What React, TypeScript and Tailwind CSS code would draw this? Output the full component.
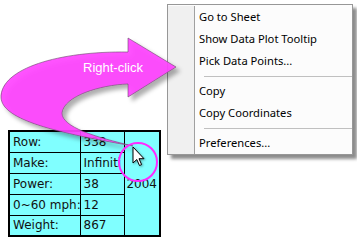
import React from "react";

const rows = [
  { label: "Row:", value: "338" },
  { label: "Make:", value: "Infiniti" },
  { label: "Power:", value: "38" },
  { label: "0~60 mph:", value: "12" },
  { label: "Weight:", value: "867" },
];

type MenuEntry = { label: string } | "sep";

const menu: MenuEntry[] = [
  { label: "Go to Sheet" },
  { label: "Show Data Plot Tooltip" },
  { label: "Pick Data Points..." },
  "sep",
  { label: "Copy" },
  { label: "Copy Coordinates" },
  "sep",
  { label: "Preferences..." },
];

function InfoTable() {
  return (
    <table
      className="w-[151px] table-fixed border-collapse border-2 border-black bg-[#80ffff] text-[12px] text-[#111]"
      style={{ fontFamily: '"DejaVu Sans", sans-serif' }}
    >
      <colgroup>
        <col className="w-[71px]" />
        <col className="w-[44px]" />
        <col className="w-[36px]" />
      </colgroup>
      <tbody>
        {rows.map((r, i) => (
          <tr key={r.label} className="h-[21px]">
            <td className="overflow-hidden whitespace-nowrap border border-black pl-[3px] leading-none">{r.label}</td>
            <td className="overflow-hidden whitespace-nowrap border border-black pl-[3px] leading-none">
              {r.value}
            </td>
            {i === 0 && (
              <td rowSpan={5} className="border border-black text-center align-middle leading-none">
                2004
              </td>
            )}
          </tr>
        ))}
      </tbody>
    </table>
  );
}

function ContextMenu() {
  return (
    <div
      className="relative flex w-[186px] border border-[#979797] bg-[#fcfcfc] pt-[1px] shadow-[4px_4px_3px_rgba(0,0,0,0.45)]"
      style={{ fontFamily: '"Noto Sans", sans-serif' }}
    >
      <div className="w-[27px] shrink-0 border-r border-[#a0a0a0] bg-[#f0f0f0]" />
      <div className="flex flex-1 flex-col">
        {menu.map((m, i) =>
          m === "sep" ? (
            <div key={i} className="flex h-[8px] items-center pl-[9px]">
              <div className="h-px w-full bg-[#c0c0c0]" />
            </div>
          ) : (
            <div key={i} className="flex h-[22px] items-center pl-[4px] text-[11.2px] text-black">
              {m.label}
            </div>
          )
        )}
      </div>
    </div>
  );
}

function CurvedArrow() {
  return (
    <svg className="pointer-events-none absolute left-0 top-0" width="357" height="241" viewBox="0 0 357 241">
      <defs>
        <filter id="sh" x="-10%" y="-10%" width="130%" height="130%">
          <feDropShadow dx="4" dy="4" stdDeviation="2" floodColor="#000" floodOpacity="0.35" />
        </filter>
      </defs>
      <path
        d="M176,67 L128,38 L128,52 C60,51 0,68 1,98 C3,118 45,131 133,146 C95,137 62,127 62,113 C64,96 100,85 128,84 L128,97 Z"
        fill="#ff40ff"
        fillOpacity="0.9"
        stroke="#6a4a6a"
        strokeWidth="0.6"
        filter="url(#sh)"
      />
      <text
        x="113"
        y="72"
        textAnchor="middle"
        fill="#fff"
        fontSize="13"
        fontFamily="Liberation Sans, Arial, sans-serif"
      >
        Right-click
      </text>
      <circle cx="138" cy="162" r="19" fill="none" stroke="#ff2aff" strokeWidth="2" />
      <path
        d="M133,147 L133,163 L136.8,159.5 L139.5,165.5 L141.6,164.6 L139,158.7 L144,158.7 Z"
        fill="#fff"
        stroke="#000"
        strokeWidth="1"
        strokeLinejoin="round"
        style={{ filter: "drop-shadow(1px 1px 1px rgba(0,0,0,0.35))" }}
      />
    </svg>
  );
}

export default function App() {
  return (
    <div className="relative flex h-[241px] w-[357px] items-start gap-[6px] overflow-hidden bg-white">
      <div className="pl-[8px] pt-[130px]">
        <InfoTable />
      </div>
      <div className="pt-[4px]">
        <ContextMenu />
      </div>
      <CurvedArrow />
    </div>
  );
}
